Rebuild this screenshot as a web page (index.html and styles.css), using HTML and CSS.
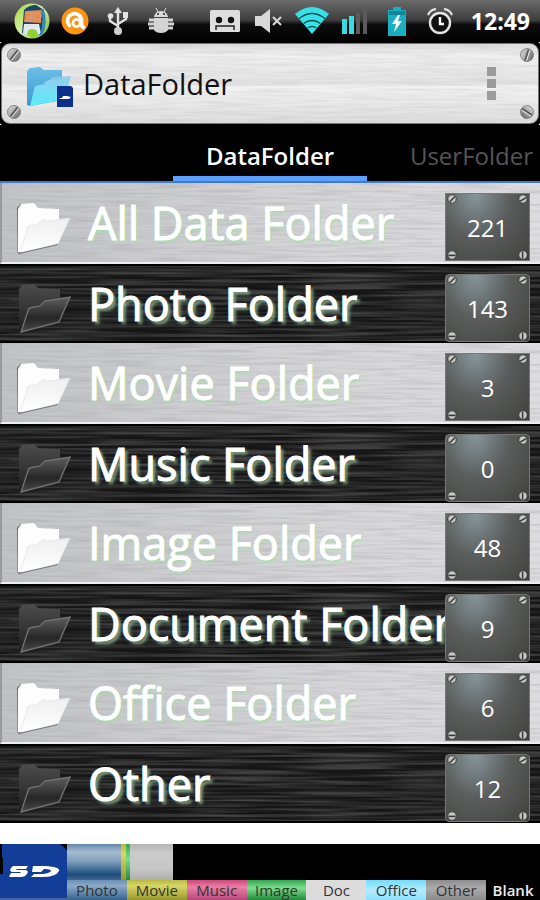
FILE: index.html
```
<!DOCTYPE html>
<html lang="en">
<head>
<meta charset="utf-8">
<meta name="viewport" content="width=device-width, initial-scale=1">
<title>DataFolder</title>
<link rel="stylesheet" href="styles.css">
</head>
<body>
<svg class="defs" width="0" height="0" aria-hidden="true">
  <defs>
    <filter id="brush-light" x="0" y="0" width="100%" height="100%">
      <feTurbulence type="fractalNoise" baseFrequency="0.02 0.4" numOctaves="3" seed="4"/>
      <feColorMatrix values="0 0 0 0 0.35  0 0 0 0 0.35  0 0 0 0 0.37  1.3 0 0 0 -0.5"/>
    </filter>
    <filter id="brush-dark" x="0" y="0" width="100%" height="100%">
      <feTurbulence type="fractalNoise" baseFrequency="0.01 0.35" numOctaves="2" seed="9"/>
      <feColorMatrix values="0 0 0 0 0.6  0 0 0 0 0.6  0 0 0 0 0.6  1 0 0 0 -0.35"/>
    </filter>
    <linearGradient id="screw-fill" x1="0" y1="0" x2="1" y2="1">
      <stop offset="0" stop-color="#ddd"/><stop offset=".5" stop-color="#aaa"/><stop offset="1" stop-color="#555"/>
    </linearGradient>
    <linearGradient id="white-flap" x1="0" y1="0" x2="0" y2="1">
      <stop offset="0" stop-color="#efefef"/><stop offset="1" stop-color="#fff"/>
    </linearGradient>
    <linearGradient id="dark-back" x1="0" y1="0" x2="0" y2="1">
      <stop offset="0" stop-color="#4c4c4c"/><stop offset="1" stop-color="#202020"/>
    </linearGradient>
    <linearGradient id="dark-flap" x1="0" y1="0" x2="0" y2="1">
      <stop offset="0" stop-color="#5e5e5e"/><stop offset=".6" stop-color="#262626"/><stop offset="1" stop-color="#4a4a4a"/>
    </linearGradient>
    <linearGradient id="blue-back" x1="0" y1="0" x2="0" y2="1">
      <stop offset="0" stop-color="#6cbfe8"/><stop offset="1" stop-color="#3c97cc"/>
    </linearGradient>
    <linearGradient id="blue-flap" x1="0" y1="0" x2="0" y2="1">
      <stop offset="0" stop-color="#8fd0ee"/><stop offset="1" stop-color="#58eefa"/>
    </linearGradient>
    <linearGradient id="app-green" x1="0" y1="0" x2="1" y2="1">
      <stop offset="0" stop-color="#9fd83a"/><stop offset=".5" stop-color="#d8f0b0"/><stop offset="1" stop-color="#62b51c"/>
    </linearGradient>
    <symbol id="screw" viewBox="0 0 14 14">
      <circle cx="7" cy="7" r="6.5" fill="url(#screw-fill)" stroke="#777" stroke-width=".8"/>
      <path d="M3.5 11.5 10.5 2.5" stroke="#555" stroke-width="2"/>
      <path d="M4.7 12 11.5 3.3" stroke="#eee" stroke-width="1"/>
    </symbol>
    <symbol id="mini-screw" viewBox="0 0 10 10">
      <circle cx="5" cy="5" r="4.2" fill="#c9c9c6" stroke="#333" stroke-width=".8"/>
      <path d="M1.5 5.4h7" stroke="#3a3a38" stroke-width="1.6"/>
    </symbol>
    <symbol id="folder-light" viewBox="0 0 56 52">
      <path d="M3 51 1.500 49 1 5l4-5 2 50z" fill="#6e6e70"/>
      <path d="M2 49V6l3-5 13-1 4 5 21 1v33L4 49z" fill="#fdfdfd"/>
      <path d="M4 50 12 23l10-2 5-5 4 2 23-3-12 26z" fill="url(#white-flap)" stroke="#e0e0e0" stroke-width=".6"/>
      <path d="M3 50.500 42 41.500" stroke="#777" stroke-width="1.200"/>
    </symbol>
    <symbol id="folder-dark" viewBox="0 0 56 52">
      <path d="M3 46V5l3-4 12-1 4 4 22 1v33L6 46z" fill="url(#dark-back)"/>
      <path d="M5 48 13 24l11-2 5-5 25-4-11 25z" fill="url(#dark-flap)" stroke="#737373" stroke-width="1.300"/>
    </symbol>
  </defs>
</svg>

<div class="status">
  <svg class="s-icon s-app" width="36" height="38" viewBox="0 0 36 38" aria-hidden="true">
    <circle cx="18" cy="19" r="17.500" fill="url(#app-green)"/>
    <path d="M10 8q5-5 12-5l8 5-3 25-19-2z" fill="#17456d"/>
    <path d="M11 9 28 8l-1 13-17-1z" fill="#e98644"/>
    <path d="M13 11h5v3h-4v2h4v3h-6M21 11h4l2 3-2 4h-4z" fill="none" stroke="#c9a590" stroke-width="1.200"/>
    <path d="M10 22h15l2 10-11 3-7-4z" fill="#dfe9ee"/>
    <path d="M13 33q0-6 5-6 6 0 6 6l-5 3z" fill="#8ed32e"/>
    <path d="M28 7q5 12-1 26" stroke="#3287b8" stroke-width="3" fill="none"/>
  </svg>
  <svg class="s-icon s-avast" width="28" height="28" viewBox="0 0 28 28" aria-hidden="true">
    <circle cx="14" cy="14" r="13.500" fill="#ff9411"/>
    <path d="M8.500 18.500A7 7 0 1 1 20.500 13v4q0 2.500 2 3.500" fill="none" stroke="#fff" stroke-width="3.600" stroke-linecap="round"/>
    <circle cx="15.500" cy="16" r="3.600" fill="none" stroke="#fff" stroke-width="2.600"/>
  </svg>
  <svg class="s-icon s-usb" width="22" height="28" viewBox="0 0 22 28" aria-hidden="true">
    <path d="M11 4v20M11 19l-8-5V9M11 17l8-5V8" fill="none" stroke="#e2e2e2" stroke-width="2.400"/>
    <path d="m11 0 4 6H7z" fill="#e2e2e2"/><circle cx="3.500" cy="9" r="2.800" fill="#e2e2e2"/>
    <path d="M16 5h5v6h-5z" fill="#e2e2e2"/><circle cx="11" cy="24" r="4" fill="#d0d0d0"/>
  </svg>
  <svg class="s-icon s-droid" width="26" height="26" viewBox="0 0 26 26" aria-hidden="true">
    <path d="M6 9q1-6 7-6t7 6z" fill="#d9d9d9"/><path d="m8 0 2 4M18 0l-2 4" stroke="#ddd"/>
    <circle cx="10" cy="6" r="1" fill="#222"/><circle cx="16" cy="6" r="1" fill="#222"/>
    <path d="M6 10h14v12q-2 3-7 3t-7-3z" fill="#d4d4d4"/>
    <path d="M1 12h5M20 12h5M0 16h6M20 16h6M1 20h5M20 20h5" stroke="#d4d4d4" stroke-width="3"/>
  </svg>
  <svg class="s-icon s-tape" width="30" height="22" viewBox="0 0 30 22" aria-hidden="true">
    <rect width="30" height="22" rx="1.500" fill="#dedede"/>
    <circle cx="9" cy="10" r="3.200" fill="#111"/><circle cx="21" cy="10" r="3.200" fill="#111"/>
    <path d="M6 20v-4h18v4" fill="none" stroke="#222" stroke-width="1.500"/>
  </svg>
  <svg class="s-icon s-mute" width="30" height="26" viewBox="0 0 30 26" aria-hidden="true">
    <path d="M1 8h6l9-7v24l-9-7H1z" fill="#d8d8d8"/>
    <path d="m19 9 8 8M27 9l-8 8" stroke="#d8d8d8" stroke-width="2"/>
  </svg>
  <svg class="s-icon s-wifi" width="34" height="28" viewBox="0 0 34 28" aria-hidden="true">
    <path d="M0 7q17-14 34 0L17 27z" fill="#35e2e8"/>
    <path d="M4 11.500q13-10 26 0M8.500 16.500q8.500-6 17 0M12.500 21q4.500-3 9 0" fill="none" stroke="#164b4d" stroke-width="1.300"/>
  </svg>
  <svg class="s-icon s-signal" width="27" height="25" viewBox="0 0 27 25" aria-hidden="true">
    <path d="M1 10h5v15H1zM8 7h5v18H8z" fill="#36dce2"/>
    <path d="M15 4h4v21h-4zM22 0h4v25h-4z" fill="#5b5b5b"/>
  </svg>
  <svg class="s-icon s-batt" width="20" height="29" viewBox="0 0 20 29" aria-hidden="true">
    <path d="M1 3h5V0h8v3h5v26H1z" fill="#19afc0"/><path d="M2 4h16v4H2z" fill="#118698"/>
    <path d="m11 8-6 9h4l-2 8 8-11h-4l2-6z" fill="#fff"/>
  </svg>
  <svg class="s-icon s-alarm" width="26" height="27" viewBox="0 0 26 27" aria-hidden="true">
    <circle cx="13" cy="15" r="10" fill="#111" stroke="#e4e4e4" stroke-width="2.400"/>
    <path d="M13 9v7h4" fill="none" stroke="#fff" stroke-width="2.400"/>
    <path d="M1 7q2-5 8-6M25 7q-2-5-8-6" fill="none" stroke="#e4e4e4" stroke-width="2.200"/>
  </svg>
  <span class="clock">12:49</span>
</div>

<header class="header">
  <svg class="brush" aria-hidden="true"><rect width="100%" height="100%" filter="url(#brush-light)"/></svg>
  <svg class="bolt tl" aria-hidden="true"><use href="#screw"/></svg>
  <svg class="bolt tr" aria-hidden="true"><use href="#screw"/></svg>
  <svg class="bolt bl" aria-hidden="true"><use href="#screw"/></svg>
  <svg class="bolt br" aria-hidden="true"><use href="#screw"/></svg>
  <svg class="logo" width="48" height="42" viewBox="0 0 48 42" aria-hidden="true">
    <path d="M1 38V4l3-3 10-1 4 3h18v30L4 39z" fill="url(#blue-back)"/>
    <path d="m18 15 5-2 4-3 18-1-6 22-20 4z" fill="#8bcbed" opacity=".8"/>
    <path d="M4 39 9 19l10-2 4-4 20-1-8 21z" fill="url(#blue-flap)"/>
    <path d="M31 19h14l2 2v19H31z" fill="#0d2f8c"/>
    <path d="M33 31h3l1-2h4l4 1-2 2h-9z" fill="#fff"/>
  </svg>
  <h1 class="title">DataFolder</h1>
  <button class="more" type="button" aria-label="More options"><i></i><i></i><i></i></button>
</header>

<nav class="tabs">
  <a class="tab active" href="#data" aria-current="page">DataFolder</a>
  <a class="tab next" href="#user">UserFolder</a>
</nav>

<main>
  <ul class="list" id="list"></ul>
</main>

<footer class="storage">
  <svg class="sd" viewBox="0 0 67 56" preserveAspectRatio="none" aria-hidden="true">
    <path d="M2 0h58l7 6v50H0V30h3V14H2z" fill="#123d98"/><path d="M0 54h67v2H0z" fill="#45619f"/>
    <path d="M13 22h15l-2 3H17l-1 1h10q3 1 1 4t-6 3H9l2-4h9l1-1h-9q-3-1-1-4zM33 22h12q16 1 14 5-3 6-17 6H31l3-3h9q7-1 8-3 0-2-6-2h-1l-3 3h-9z" fill="#fff"/>
  </svg>
  <div class="usage">
    <div class="bar" id="bar"></div>
    <ul class="legend">
      <li class="photo">Photo</li><li class="movie">Movie</li><li class="music">Music</li><li class="image">Image</li>
      <li class="doc">Doc</li><li class="office">Office</li><li class="other">Other</li><li class="blank">Blank</li>
    </ul>
  </div>
</footer>
<script src="app.js"></script>
</body>
</html>
```
FILE: styles.css
```
* { box-sizing: border-box; }
body {
  margin: 0;
  min-height: 100vh;
  display: flex;
  flex-direction: column;
  background: #fff;
  font-family: "Open Sans", "Noto Sans", sans-serif;
  color: #fff;
}
ul { list-style: none; margin: 0; padding: 0; }
a { color: inherit; text-decoration: none; }
button { font: inherit; color: inherit; background: none; border: 0; padding: 0; }
.defs { position: absolute; }
.brush { position: absolute; inset: 0; width: 100%; height: 100%; }

.status {
  height: 42px;
  padding: 0 10px 0 14px;
  display: flex;
  align-items: center;
  background: linear-gradient(#6b6b6b, #3d3d3d 48%, #0d0d0d 58%, #000);
}
.s-icon { flex: none; }
.s-avast { margin-left: 11px; }
.s-usb { margin-left: 18px; }
.s-droid { margin-left: 19px; }
.s-tape { margin-left: auto; }
.s-mute { margin-left: 14px; }
.s-wifi { margin-left: 11px; }
.s-signal { margin-left: 12px; }
.s-batt { margin-left: 19px; }
.s-alarm { margin-left: 20px; }
.clock { margin-left: 18px; font-size: 23px; font-weight: 700; line-height: 42px; }

.header {
  position: relative;
  height: 83px;
  padding: 0 42px 0 24px;
  display: flex;
  align-items: center;
  gap: 9px;
  border: 2px solid #777;
  border-radius: 10px;
  background: linear-gradient(#dcdcdc, #f0f0f0 12px, #e3e3e3 50%, #f2f2f2 54%, #dedede);
  outline: 4px solid #000;
  outline-offset: -1px;
  overflow: hidden;
}
.header .brush { opacity: .3; }
.bolt { position: absolute; width: 14px; height: 14px; }
.tl { left: 5px; top: 4px; }
.tr { right: 4px; top: 4px; transform: rotate(-20deg); }
.bl { left: 5px; bottom: 4px; }
.br { right: 4px; bottom: 4px; transform: rotate(85deg); }
.logo, .title, .more { position: relative; }
.logo { flex: none; margin-top: 8px; }
.title { flex: 1; margin: 0; font-size: 29px; font-weight: 400; line-height: 40px; color: #111; }
.more { display: grid; gap: 3px; }
.more i { width: 9px; height: 9px; background: #9b9b9b; }

.tabs {
  height: 58px;
  display: grid;
  grid-template-columns: 1fr auto 1fr;
  background: #000;
  border-bottom: 2px solid #3d7ad0;
}
.tab { padding-top: 11px; font-size: 24px; line-height: 40px; }
.active { grid-column: 2; padding-left: 33px; padding-right: 33px; font-weight: 600; border-bottom: 5px solid #5aa0ff; }
.next { color: #555; justify-self: end; padding-right: 7px; }

.row {
  position: relative;
  width: 100%;
  display: grid;
  grid-template-columns: 56px 1fr 85px;
  align-items: center;
  padding: 0 10px 0 16px;
  text-align: left;
}
.row.light { height: 81px; background: linear-gradient(90deg, #c2c3c6, #d6d6d9 60%, #dedee2); border-left: 2px solid #999; border-bottom: 2px solid #eee; padding-left: 14px; }
.row.dark { height: 79px; background: #161616; border: solid #000; border-width: 2px 0; }
.light .brush { opacity: .6; }
.dark .brush { opacity: .6; }
.folder { position: relative; width: 56px; height: 52px; margin-top: 12px; }
.name {
  position: relative;
  padding-left: 16px;
  overflow: hidden;
  white-space: nowrap;
  font-size: 45px;
  line-height: 68px;
  -webkit-text-stroke: 1px #fff;
}
.light .name { text-shadow: 1px 2px 3px #a5dfa8; }
.dark .name { text-shadow: 3px 3px 3px #7fa483; }
.plate {
  position: relative;
  height: 68px;
  margin-top: 8px;
  border: 1px solid #777;
  background: radial-gradient(ellipse at 35% 0, #87969b, #5b5e5d 45%, #41403e 100%);
  text-align: center;
  font-size: 24px;
  line-height: 68px;
}
.dark .plate { border-radius: 4px; }
.pin { position: absolute; width: 10px; height: 10px; }
.pin.tl { left: 1px; top: 0; transform: rotate(-45deg); }
.pin.tr { right: 1px; top: 0; transform: rotate(-30deg); }
.pin.bl { left: 1px; bottom: 0; transform: none; }
.pin.br { right: 1px; bottom: 0; transform: rotate(90deg); }

.storage { margin-top: auto; display: flex; background: #000; }
.sd { width: 67px; height: 56px; flex: none; }
.usage { flex: 1; display: flex; flex-direction: column; min-width: 0; }
.bar { height: 36px; display: flex; }
.legend { display: grid; grid-template-columns: repeat(7, 60fr) 54fr; font-size: 15px; line-height: 20px; text-align: center; color: #333; }
.photo { background: linear-gradient(#6c90b4, #8baac6 30%, #37648f); }
.movie { background: linear-gradient(#b9b941, #d7d766 30%, #97972e); }
.music { background: linear-gradient(#d0477a, #ea7fa4 35%, #b9487a); }
.image { background: linear-gradient(#2fa64d, #7ddf8d 40%, #238a3b); }
.doc { background: #dcdcdc; }
.office { background: linear-gradient(#71dcff, #b5ecff 50%, #8be2ff); }
.other { background: linear-gradient(#8d8d8d, #ababab 40%, #8a8a8a); }
.legend .blank { color: #eee; font-weight: 600; }
.bar .photo { background: linear-gradient(#6288ac, #a6bccf 22%, #7f9fbc 48%, #1d4d7e 85%, #42668c); }
.bar .rest { background: linear-gradient(#b4b4b4, #cbcbcb 25%, #c5c5c5 70%, #adadad); }
```
FILE: app.js
```
const folders = [
  ["All Data Folder", 221], ["Photo Folder", 143], ["Movie Folder", 3], ["Music Folder", 0],
  ["Image Folder", 48], ["Document Folder", 9], ["Office Folder", 6], ["Other", 12]
];
const pins = ["tl", "tr", "bl", "br"]
  .map(p => `<svg class="pin ${p}" aria-hidden="true"><use href="#mini-screw"/></svg>`).join("");
document.getElementById("list").innerHTML = folders.map(([name, count], i) => {
  const tone = i % 2 ? "dark" : "light";
  return `<li><button type="button" class="row ${tone}">
    <svg class="brush" aria-hidden="true"><rect width="100%" height="100%" filter="url(#brush-${tone})"/></svg>
    <svg class="folder" aria-hidden="true"><use href="#folder-${tone}"/></svg>
    <span class="name">${name}</span>
    <span class="plate">${pins}${count}</span>
  </button></li>`;
}).join("");

const usage = [["photo", 11.4], ["movie", 1], ["image", 0.9], ["rest", 9.1]];
document.getElementById("bar").innerHTML = usage
  .map(([kind, share]) => `<span class="${kind}" style="width:${share}%"></span>`).join("");
```
